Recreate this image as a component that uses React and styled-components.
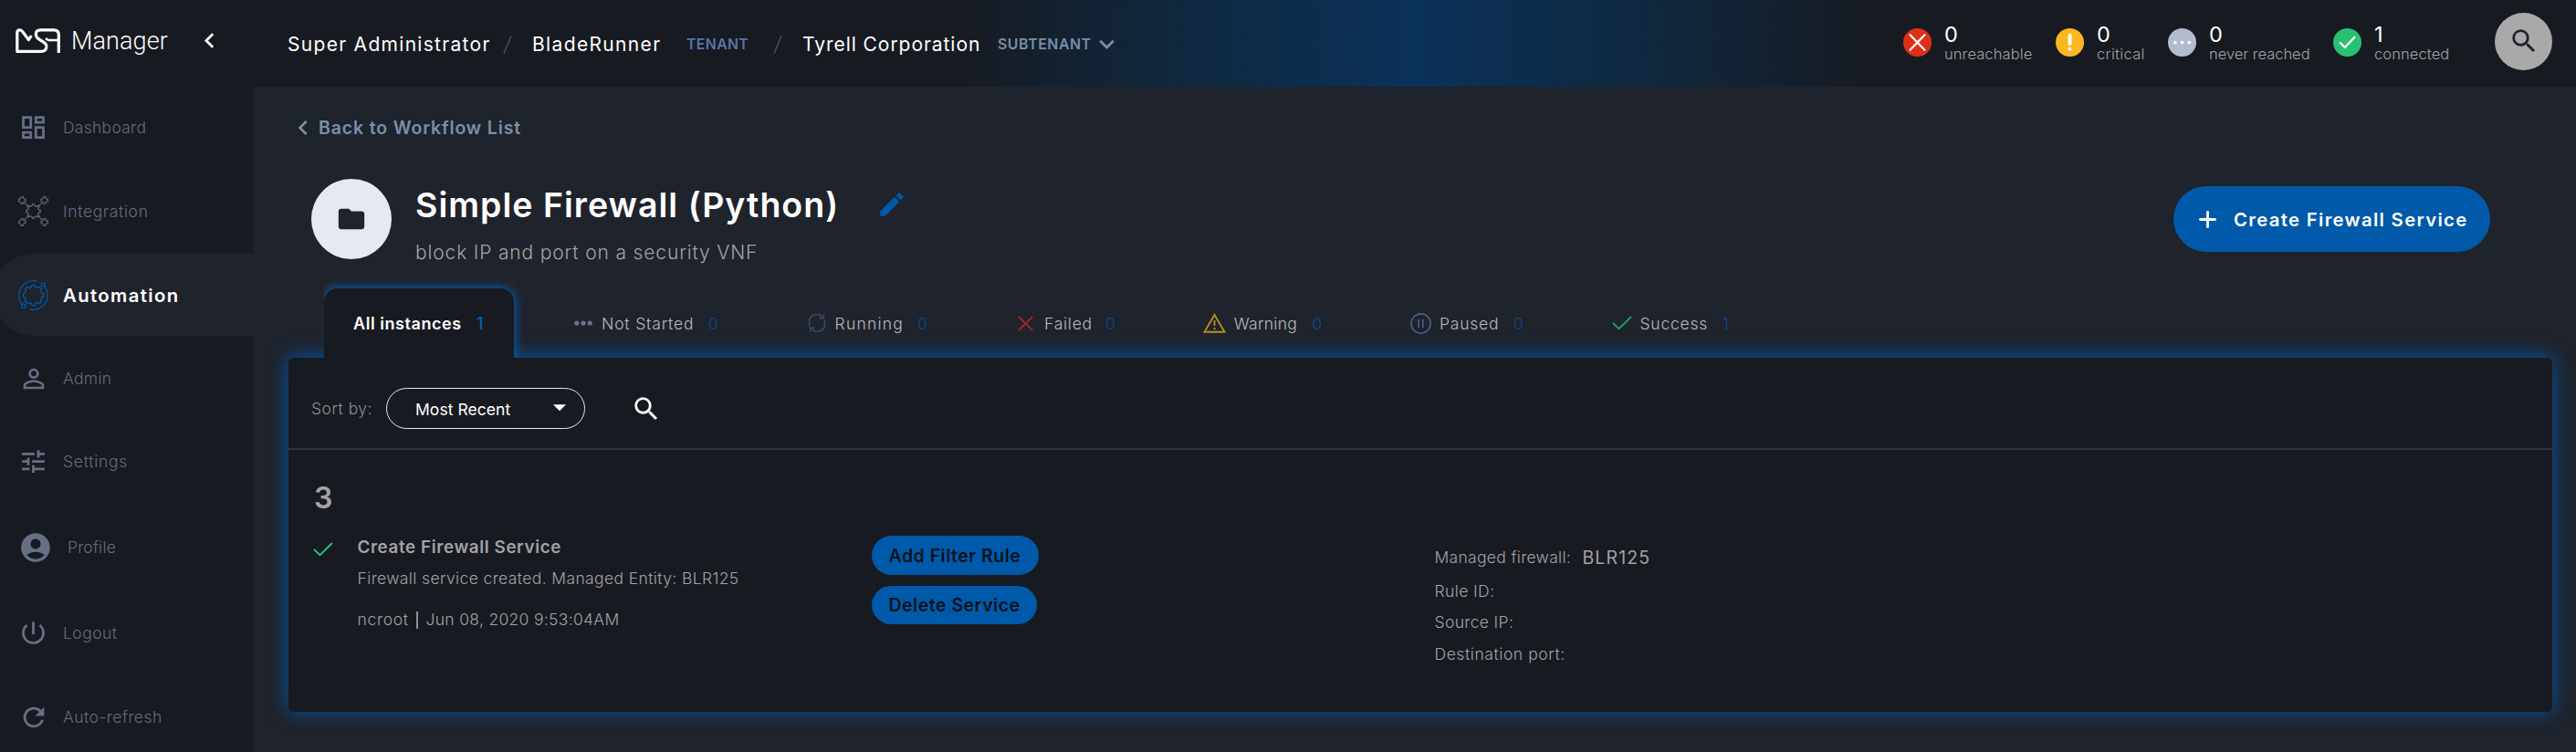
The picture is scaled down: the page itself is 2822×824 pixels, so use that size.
import React from 'react';
import styled, { createGlobalStyle, css } from 'styled-components';
import {
  MdOutlineDashboard, MdPersonOutline, MdTune, MdAccountCircle, MdPowerSettingsNew, MdRefresh,
  MdEdit, MdFolder, MdSearch, MdChevronLeft, MdExpandMore, MdArrowDropDown,
} from 'react-icons/md';

const colors = {
  dark: '#171a21',
  page: '#1f232b',
  blue: '#0059a9',
  grey: '#a3a3a3',
  nav: '#656c7d',
  navIcon: '#667084',
  steel: '#7990a8',
};

const GlobalStyle = createGlobalStyle`
  * { box-sizing: border-box; }
  body {
    margin: 0;
    background: ${colors.page};
    color: #fff;
    font-family: Inter, "Liberation Sans", sans-serif;
    white-space: nowrap;
  }
  svg { display: block; flex: none; }
  button { font-family: inherit; border: 0; padding: 0; white-space: nowrap; }
`;

/* ---------- drawings ---------- */

const gearPath = (cx, cy, outer, inner, teeth) => {
  const points = [];
  const step = (Math.PI * 2) / teeth;
  for (let i = 0; i < teeth; i += 1) {
    const a = i * step - Math.PI / 2;
    [[-0.27, inner], [-0.2, outer], [0.2, outer], [0.27, inner]].forEach(([k, r]) => {
      points.push(`${(cx + Math.cos(a + k * step) * r).toFixed(2)} ${(cy + Math.sin(a + k * step) * r).toFixed(2)}`);
    });
  }
  return `M${points.join('L')}Z`;
};

const Logo = () => (
  <svg width="50" height="28" viewBox="0 0 50 28" fill="none" stroke="#fff" strokeWidth="3.2" strokeLinejoin="round">
    <path d="M47.3 27V7Q47.3 1.8 42 1.8H27.5Q22.3 1.8 22.3 6.5Q22.3 9.3 25.3 11.7L31 15.3Q34.3 17.8 33.8 21Q33 25.4 28 25.4H1.8V5Q1.8 1.8 4.6 1.8Q6.6 1.8 8 4L14.3 12.6L17.4 8.2" />
    <path d="M33 11.2L36 13H47" strokeWidth="2.6" />
  </svg>
);

const IntegrationIcon = () => (
  <svg width="33" height="33" viewBox="0 0 33 33" fill="none" stroke={colors.navIcon} strokeWidth="1.1">
    <path d={gearPath(16.5, 16.5, 7.8, 6.2, 8)} />
    {[[4.2, 4.5], [28.8, 4.5], [4.2, 28.5], [28.8, 28.5]].map(([x, y]) => (
      <path key={`${x}${y}`} d={gearPath(x, y, 4, 2.9, 4)} />
    ))}
    <path d="M7 7.3L11.5 11.7M26 7.3L21.5 11.7M7 25.7L11.5 21.3M26 25.7L21.5 21.3" strokeDasharray="2 1" strokeWidth="1.5" />
  </svg>
);

const AutomationIcon = () => (
  <svg width="33" height="33" viewBox="0 0 33 33" fill="none" stroke={colors.blue} strokeWidth="1.3">
    <path d={gearPath(16.5, 16.5, 11.3, 9.5, 8)} />
    <path d="M20 1A15.9 15.9 0 0 0 4.2 26.4M13 32A15.9 15.9 0 0 0 28.8 6.6" />
    <circle cx="27.3" cy="4.8" r="2.1" />
    <circle cx="5.7" cy="28.2" r="2.1" />
  </svg>
);

const Slash = () => (
  <svg width="10" height="20" viewBox="0 0 10 20" stroke="#4b4f56" strokeWidth="1.5">
    <path d="M1 19.5L9 .5" />
  </svg>
);

const statusMarks = {
  unreachable: <path d="M7.8 7.5L24.2 24.5M24.2 7.5L7.8 24.5" />,
  critical: <path d="M16 8V17.5M16 23.4V23.6" strokeWidth="4" />,
  never: <path d="M8 16H8.1M16 16H16.1M24 16H24.1" strokeWidth="3.8" />,
  connected: <path d="M8 16.5L13.3 21.5L24.2 10" />,
};

const DotsIcon = () => (
  <svg width="20" height="6" viewBox="0 0 20 6" fill="#6b7488">
    <circle cx="2.8" cy="3" r="2.6" /><circle cx="10" cy="3" r="2.6" /><circle cx="17.2" cy="3" r="2.6" />
  </svg>
);
const RunningIcon = () => (
  <svg width="20" height="20" viewBox="0 0 20 20" fill="none" stroke="#3b4863" strokeWidth="1.7">
    <path d="M1.6 13.5V9A8 8 0 0 1 15.5 3.2M18.4 6.5V11A8 8 0 0 1 4.5 16.8" />
    <path d="M12.5 4.6H17.4V.4M7.5 15.4H2.6V19.6" />
  </svg>
);
const FailedIcon = () => (
  <svg width="17" height="17" viewBox="0 0 17 17" stroke="#a32b1e" strokeWidth="1.8">
    <path d="M.8.8L16.2 16.2M16.2.8L.8 16.2" />
  </svg>
);
const WarningIcon = () => (
  <svg width="25" height="22" viewBox="0 0 25 22" fill="none" stroke="#b98d20" strokeWidth="1.9">
    <path d="M12.5 2L23.5 20.8H1.5Z" /><path d="M12.5 8V14M12.5 16V18.2" />
  </svg>
);
const PausedIcon = () => (
  <svg width="23" height="23" viewBox="0 0 23 23" fill="none" stroke="#4d5d85" strokeWidth="1.6">
    <circle cx="11.5" cy="11.5" r="10.6" /><path d="M9.2 7V16M13.8 7V16" />
  </svg>
);
const CheckIcon = ({ color }) => (
  <svg width="22" height="16" viewBox="0 0 22 16" fill="none" stroke={color} strokeWidth="2">
    <path d="M1 8L7.5 14.2L21 1" />
  </svg>
);
const PlusIcon = () => (
  <svg width="19" height="19" viewBox="0 0 19 19" stroke="#fff" strokeWidth="2.9" strokeLinecap="round">
    <path d="M9.5 1.5V17.5M1.5 9.5H17.5" />
  </svg>
);

/* ---------- shell and sidebar ---------- */

const Shell = styled.div`
  display: flex;
  height: 100vh;
  overflow: hidden;
`;
const Sidebar = styled.aside`
  width: 278px;
  flex: none;
  background: ${colors.dark};
`;
const Brand = styled.div`
  display: flex;
  align-items: center;
  height: 95px;
  padding: 0 0 6px 17px;
`;
const BrandName = styled.span`
  width: 135px;
  margin-left: 11px;
  font: 300 27px/32px Roboto, sans-serif;
  letter-spacing: 0.1px;
`;
const Nav = styled.nav`
  display: flex;
  flex-direction: column;
`;
const NavItem = styled.a`
  display: flex;
  align-items: center;
  height: 90px;
  margin-top: ${(p) => p.$gap}px;
  padding: 0 0 1px 20px;
  color: ${colors.nav};
  font-size: 17.5px;
  font-weight: 300;
  letter-spacing: ${(p) => p.$track}px;
  ${(p) => p.$active && css`
    margin-left: -8px;
    padding: 0 0 0 28px;
    border-radius: 45px 0 0 45px;
    background: ${colors.page};
    color: #fff;
    font-size: 20.3px;
    font-weight: 600;
  `}
`;
const NavIcon = styled.span`
  display: grid;
  place-items: center;
  width: ${(p) => (p.$wide ? 38 : 33)}px;
  margin-right: 16px;
  color: ${colors.navIcon};
`;

const navItems = [
  { label: 'Dashboard', icon: <MdOutlineDashboard size={33} />, gap: 0, track: 0.27 },
  { label: 'Integration', icon: <IntegrationIcon />, gap: 2, track: 0.64 },
  { label: 'Automation', icon: <AutomationIcon />, gap: 1, track: 1.4, active: true },
  { label: 'Admin', icon: <MdPersonOutline size={34} />, gap: 2, track: 0.3 },
  { label: 'Settings', icon: <MdTune size={33} />, gap: 1, track: 0.74 },
  { label: 'Profile', icon: <MdAccountCircle size={38} />, gap: 4, track: 0.18, wide: true },
  { label: 'Logout', icon: <MdPowerSettingsNew size={33} />, gap: 4, track: 0.45 },
  { label: 'Auto-refresh', icon: <MdRefresh size={34} />, gap: 2, track: 0.47 },
];

/* ---------- header ---------- */

const Main = styled.main`
  flex: 1;
  min-width: 0;
`;
const Header = styled.header`
  display: flex;
  align-items: center;
  justify-content: space-between;
  height: 95px;
  padding: 0 26px 3px 37px;
  background: linear-gradient(90deg, ${colors.dark} 30%, #0f2941 41%, #0a3159 50%, #0f2941 59%, ${colors.dark} 70%);
`;
const Breadcrumb = styled.div`
  display: grid;
  grid-template-columns: 236px 32px 169px 95px 32px 214px 103px 33px;
  align-items: center;
  margin-top: 5px;
`;
const Crumb = styled.span`
  font-size: 21px;
  letter-spacing: ${(p) => p.$track}px;
`;
const CrumbKind = styled.span`
  color: ${(p) => p.$color};
  font-size: 15.8px;
  font-weight: 600;
  letter-spacing: ${(p) => p.$track}px;
`;
const HeaderRight = styled.div`
  display: flex;
  align-items: center;
`;
const Status = styled.div`
  display: flex;
  align-items: center;
  gap: 14px;
  width: ${(p) => p.$width}px;
`;
const StatusDisc = styled.svg`
  border-radius: 50%;
  background: ${(p) => p.$color};
`;
const StatusText = styled.div`
  display: flex;
  flex-direction: column;
`;
const StatusCount = styled.span`
  font-size: 23.5px;
  line-height: 26px;
`;
const StatusLabel = styled.span`
  color: ${colors.grey};
  font-size: 16.5px;
  font-weight: 300;
  line-height: 16px;
  letter-spacing: ${(p) => p.$track}px;
`;
const RoundSearch = styled.button`
  display: grid;
  place-items: center;
  width: 63px;
  height: 63px;
  margin-bottom: 2px;
  border-radius: 50%;
  background: #a9a9a9;
  color: ${colors.page};
`;

const statuses = [
  { kind: 'unreachable', label: 'unreachable', count: 0, color: '#de2f17', width: 167, track: 0.1 },
  { kind: 'critical', label: 'critical', count: 0, color: '#fab721', width: 123, track: 0.3 },
  { kind: 'never', label: 'never reached', count: 0, color: '#b3bccd', width: 181, track: -0.02 },
  { kind: 'connected', label: 'connected', count: 1, color: '#28c072', width: 177, track: 0.1 },
];

/* ---------- workflow heading ---------- */

const Content = styled.div`
  padding: 28px 26px 0 38px;
`;
const BackLink = styled.a`
  display: flex;
  align-items: center;
  gap: 1px;
  height: 34px;
  color: ${colors.steel};
  font-size: 19.5px;
  font-weight: 600;
  letter-spacing: 0.85px;
`;
const Heading = styled.div`
  display: flex;
  align-items: flex-start;
  height: 88px;
  margin-top: 39px;
  padding: 0 68px 0 25px;
`;
const FolderDisc = styled.span`
  display: grid;
  place-items: center;
  width: 88px;
  height: 88px;
  margin-right: 26px;
  border-radius: 50%;
  background: #e6e9ef;
  color: ${colors.page};
`;
const TitleBlock = styled.div`
  display: flex;
  flex-direction: column;
  gap: 17px;
  padding-top: 6px;
`;
const TitleRow = styled.div`
  display: flex;
  align-items: center;
  justify-content: space-between;
  width: 539px;
  height: 44px;
  color: ${colors.blue};
`;
const Title = styled.h1`
  margin: 0;
  color: #fff;
  font-size: 37.5px;
  font-weight: 600;
  letter-spacing: 1.02px;
`;
const Subtitle = styled.span`
  color: ${colors.grey};
  font-size: 21px;
  font-weight: 300;
  line-height: 28px;
  letter-spacing: 0.85px;
`;
const CreateButton = styled.button`
  display: flex;
  align-items: center;
  gap: 19px;
  width: 347px;
  height: 72px;
  margin: 8px 0 0 auto;
  padding-left: 28px;
  border-radius: 36px;
  background: ${colors.blue};
  color: #fff;
  font-size: 20.3px;
  font-weight: 600;
  letter-spacing: 1.33px;
`;

/* ---------- tabs ---------- */

const Tabs = styled.div`
  display: flex;
  height: 76px;
  margin: 32px 0 0 39px;
`;
const ActiveTab = styled.div`
  position: relative;
  z-index: 1;
  display: flex;
  align-items: center;
  width: 208px;
  margin-right: 66px;
  padding-left: 32px;
  border-radius: 15px 15px 0 0;
  background: ${colors.dark};
  box-shadow: 0 0 11px 1px #0062bd;
  clip-path: inset(-20px -20px 0 0);
  font-size: 18px;
  font-weight: 600;
  letter-spacing: 0.55px;
`;
const Tab = styled.div`
  position: relative;
  z-index: 1;
  display: flex;
  align-items: center;
  width: ${(p) => p.$width}px;
  color: #b8babd;
  font-size: 17.5px;
  font-weight: 300;
  letter-spacing: ${(p) => p.$track}px;
`;
const TabIcon = styled.span`
  width: ${(p) => p.$width}px;
`;
const TabLabel = styled.span`
  width: ${(p) => p.$width}px;
`;
const TabCount = styled.span`
  color: ${(p) => (p.$active ? colors.blue : '#0b4c8a')};
`;

const tabs = [
  { label: 'Not Started', count: 0, icon: <DotsIcon />, width: 255.6, iconW: 30, labelW: 117, track: 0.84 },
  { label: 'Running', count: 0, icon: <RunningIcon />, width: 230.4, iconW: 30, labelW: 90.5, track: 1.2 },
  { label: 'Failed', count: 0, icon: <FailedIcon />, width: 202.7, iconW: 29, labelW: 67, track: 0.75 },
  { label: 'Warning', count: 0, icon: <WarningIcon />, width: 227.3, iconW: 34, labelW: 85.5, track: 0.32 },
  { label: 'Paused', count: 0, icon: <PausedIcon />, width: 221, iconW: 32, labelW: 81, track: 0.78 },
  { label: 'Success', count: 1, icon: <CheckIcon color="#239a5d" />, width: 160, iconW: 30.5, labelW: 90.5, track: 0.8 },
];

/* ---------- instances panel ---------- */

const Panel = styled.section`
  height: 388px;
  border-radius: 6px;
  background: ${colors.dark};
  box-shadow: 0 -1px 22px #0059ab;
`;
const Toolbar = styled.div`
  display: flex;
  align-items: center;
  height: 101px;
  padding: 12px 0 0 25px;
  border-bottom: 2px solid #303439;
`;
const SortLabel = styled.span`
  width: 82px;
  color: #909295;
  font-size: 17.5px;
  font-weight: 300;
  letter-spacing: 0.5px;
`;
const Select = styled.div`
  display: flex;
  align-items: center;
  justify-content: space-between;
  width: 218px;
  height: 45px;
  margin-right: 49.5px;
  padding: 0 10px 0 31px;
  border: 1px solid #e8e8e8;
  border-radius: 23px;
  font-size: 17.5px;
  letter-spacing: 0.05px;
`;
const SelectValue = styled.span`
  padding-top: 2px;
`;
const Caret = styled(MdArrowDropDown)`
  margin-bottom: 4px;
`;
const Instances = styled.div`
  padding: 38px 0 0 25px;
`;
const InstanceId = styled.div`
  padding-left: 3px;
  margin-bottom: 26px;
  color: ${colors.grey};
  font-size: 32px;
  font-weight: 600;
  line-height: 30px;
`;
const Instance = styled.div`
  display: grid;
  grid-template-columns: 50.5px 563.5px 616.5px 1fr;
  align-items: start;
  color: ${colors.grey};
  font-weight: 300;
  font-size: 17.5px;
  line-height: 24px;
`;
const InstanceState = styled.span`
  padding: 7px 0 0 2px;
`;
const Process = styled.div`
  padding-top: 1px;
`;
const ProcessName = styled.div`
  font-size: 18.8px;
  font-weight: 600;
  letter-spacing: 0.62px;
`;
const ProcessText = styled.div`
  margin-top: 10px;
  letter-spacing: 0.38px;
`;
const ProcessMeta = styled.div`
  display: flex;
  align-items: center;
  margin-top: 21px;
  letter-spacing: 0.31px;
`;
const Author = styled.span`
  width: 64.5px;
  letter-spacing: 0.7px;
`;
const MetaDivider = styled.span`
  width: 2px;
  height: 19px;
  margin-right: 8.5px;
  background: #8f8f8f;
`;
const Actions = styled.div`
  display: flex;
  flex-direction: column;
  align-items: flex-start;
  gap: 12px;
`;
const ActionButton = styled.button`
  width: ${(p) => p.$width}px;
  height: ${(p) => p.$height}px;
  padding-left: 18.5px;
  border-radius: 22px;
  background: ${colors.blue};
  color: #0b121b;
  text-align: left;
  font-size: 19.5px;
  font-weight: 600;
  letter-spacing: 0.5px;
`;
const Details = styled.div`
  display: flex;
  flex-direction: column;
  gap: 10.5px;
  padding-top: 12px;
`;
const Detail = styled.div`
  display: flex;
  align-items: center;
  letter-spacing: ${(p) => p.$track}px;
  &:first-child { margin-bottom: 2px; }
`;
const DetailLabel = styled.span`
  min-width: 162px;
`;
const DetailValue = styled.span`
  font-size: 19.5px;
  font-weight: 400;
  letter-spacing: 1.1px;
`;

const details = [
  { label: 'Managed firewall:', value: 'BLR125', track: 0.31 },
  { label: 'Rule ID:', track: 0.4 },
  { label: 'Source IP:', track: 0.36 },
  { label: 'Destination port:', track: 0.57 },
];

export default function App() {
  return (
    <Shell>
      <GlobalStyle />
      <Sidebar>
        <Brand>
          <Logo />
          <BrandName>Manager</BrandName>
          <MdChevronLeft size={33} />
        </Brand>
        <Nav>
          {navItems.map((n) => (
            <NavItem key={n.label} $gap={n.gap} $track={n.track} $active={n.active}>
              <NavIcon $wide={n.wide}>{n.icon}</NavIcon>
              {n.label}
            </NavItem>
          ))}
        </Nav>
      </Sidebar>
      <Main>
        <Header>
          <Breadcrumb>
            <Crumb $track={1.3}>Super Administrator</Crumb>
            <Slash />
            <Crumb $track={1.35}>BladeRunner</Crumb>
            <CrumbKind $color="#5a74a9" $track={0.38}>TENANT</CrumbKind>
            <Slash />
            <Crumb $track={0.95}>Tyrell Corporation</Crumb>
            <CrumbKind $color={colors.steel} $track={0.58}>SUBTENANT</CrumbKind>
            <MdExpandMore size={33} color={colors.steel} />
          </Breadcrumb>
          <HeaderRight>
            {statuses.map((s) => (
              <Status key={s.kind} $width={s.width}>
                <StatusDisc
                  $color={s.color}
                  width="31"
                  height="31"
                  viewBox="0 0 32 32"
                  fill="none"
                  stroke="#fff"
                  strokeWidth="2.3"
                  strokeLinecap="round"
                >
                  {statusMarks[s.kind]}
                </StatusDisc>
                <StatusText>
                  <StatusCount>{s.count}</StatusCount>
                  <StatusLabel $track={s.track}>{s.label}</StatusLabel>
                </StatusText>
              </Status>
            ))}
            <RoundSearch><MdSearch size={34} /></RoundSearch>
          </HeaderRight>
        </Header>
        <Content>
          <BackLink><MdChevronLeft size={32} />Back to Workflow List</BackLink>
          <Heading>
            <FolderDisc><MdFolder size={34} /></FolderDisc>
            <TitleBlock>
              <TitleRow>
                <Title>Simple Firewall (Python)</Title>
                <MdEdit size={34} />
              </TitleRow>
              <Subtitle>block IP and port on a security VNF</Subtitle>
            </TitleBlock>
            <CreateButton><PlusIcon />Create Firewall Service</CreateButton>
          </Heading>
          <Tabs>
            <ActiveTab>
              <TabLabel $width={135}>All instances</TabLabel>
              <TabCount $active>1</TabCount>
            </ActiveTab>
            {tabs.map((t) => (
              <Tab key={t.label} $width={t.width} $track={t.track}>
                <TabIcon $width={t.iconW}>{t.icon}</TabIcon>
                <TabLabel $width={t.labelW}>{t.label}</TabLabel>
                <TabCount>{t.count}</TabCount>
              </Tab>
            ))}
          </Tabs>
          <Panel>
            <Toolbar>
              <SortLabel>Sort by:</SortLabel>
              <Select>
                <SelectValue>Most Recent</SelectValue>
                <Caret size={34} />
              </Select>
              <MdSearch size={34} />
            </Toolbar>
            <Instances>
              <InstanceId>3</InstanceId>
              <Instance>
                <InstanceState><CheckIcon color="#28c072" /></InstanceState>
                <Process>
                  <ProcessName>Create Firewall Service</ProcessName>
                  <ProcessText>Firewall service created. Managed Entity: BLR125</ProcessText>
                  <ProcessMeta>
                    <Author>ncroot</Author>
                    <MetaDivider />
                    Jun 08, 2020 9:53:04AM
                  </ProcessMeta>
                </Process>
                <Actions>
                  <ActionButton $width={183} $height={43}>Add Filter Rule</ActionButton>
                  <ActionButton $width={181} $height={42}>Delete Service</ActionButton>
                </Actions>
                <Details>
                  {details.map((d) => (
                    <Detail key={d.label} $track={d.track}>
                      <DetailLabel>{d.label}</DetailLabel>
                      {d.value && <DetailValue>{d.value}</DetailValue>}
                    </Detail>
                  ))}
                </Details>
              </Instance>
            </Instances>
          </Panel>
        </Content>
      </Main>
    </Shell>
  );
}
